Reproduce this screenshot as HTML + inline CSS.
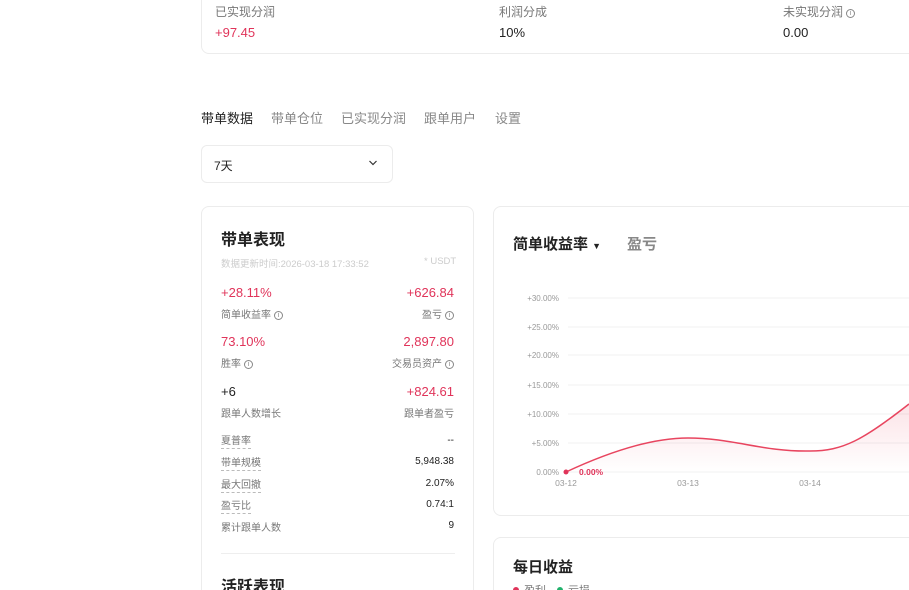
<!DOCTYPE html>
<html style="width:909px;height:590px;overflow:hidden"><head><meta charset="utf-8"><style>
*{margin:0;padding:0;box-sizing:border-box}
body{width:909px;height:590px;overflow:hidden;background:#fff;font-family:"Liberation Sans","Noto Sans CJK SC",sans-serif;color:#222}
#w{position:relative;width:909px;height:590px;overflow:hidden}
.a{position:absolute;white-space:nowrap}
.card{position:absolute;border:1px solid #ececec;border-radius:8px;background:#fff}
.red{color:#e0345a}
.g{color:#777}
.info{display:inline-block;width:9px;height:9px;border:1px solid #888;border-radius:50%;font-size:7px;line-height:7px;text-align:center;vertical-align:1px;margin-left:3px;color:#888}
.dash{border-bottom:1px dashed #bbb;padding-bottom:1px}
</style></head><body><div id="w">
<div class="card" style="left:201px;top:-10px;width:720px;height:64px"></div>
<div class="a g" style="left:215px;top:3px;font-size:12px">已实现分润</div>
<div class="a red" style="left:215px;top:25px;font-size:13px">+97.45</div>
<div class="a g" style="left:499px;top:3px;font-size:12px">利润分成</div>
<div class="a" style="left:499px;top:25px;font-size:13px">10%</div>
<div class="a g" style="left:783px;top:3px;font-size:12px">未实现分润<span class="info">i</span></div>
<div class="a" style="left:783px;top:25px;font-size:13px">0.00</div>

<div class="a" style="left:201px;top:108px;font-size:13px;color:#222">带单数据</div>
<div class="a" style="left:271px;top:108px;font-size:13px;color:#888">带单仓位</div>
<div class="a" style="left:341px;top:108px;font-size:13px;color:#888">已实现分润</div>
<div class="a" style="left:424px;top:108px;font-size:13px;color:#888">跟单用户</div>
<div class="a" style="left:495px;top:108px;font-size:13px;color:#888">设置</div>

<div class="card" style="left:201px;top:145px;width:192px;height:38px;border-radius:6px"></div>
<div class="a" style="left:214px;top:157px;font-size:12px">7天</div>
<svg class="a" style="left:368px;top:159px" width="10" height="8"><path d="M1.5 2 L5 5.5 L8.5 2" stroke="#333" stroke-width="1.2" fill="none"/></svg>

<div class="card" style="left:201px;top:206px;width:273px;height:400px"></div>
<div class="a" style="left:221px;top:226px;font-size:16px;font-weight:bold">带单表现</div>
<div class="a" style="left:221px;top:256px;font-size:9.5px;color:#ccc">数据更新时间:2026-03-18 17:33:52</div>
<div class="a" style="left:424px;top:256px;font-size:9.5px;color:#ccc">* USDT</div>
<div class="a red" style="left:221px;top:285px;font-size:13px">+28.11%</div>
<div class="a red" style="right:455px;top:285px;font-size:13px">+626.84</div>
<div class="a g" style="left:221px;top:306px;font-size:10px">简单收益率<span class="info">i</span></div>
<div class="a g" style="right:455px;top:306px;font-size:10px">盈亏<span class="info">i</span></div>
<div class="a red" style="left:221px;top:334px;font-size:13px">73.10%</div>
<div class="a red" style="right:455px;top:334px;font-size:13px">2,897.80</div>
<div class="a g" style="left:221px;top:355px;font-size:10px">胜率<span class="info">i</span></div>
<div class="a g" style="right:455px;top:355px;font-size:10px">交易员资产<span class="info">i</span></div>
<div class="a" style="left:221px;top:384px;font-size:13px">+6</div>
<div class="a red" style="right:455px;top:384px;font-size:13px">+824.61</div>
<div class="a g" style="left:221px;top:405px;font-size:10px">跟单人数增长</div>
<div class="a g" style="right:455px;top:405px;font-size:10px">跟单者盈亏</div>
<div class="a g" style="left:221px;top:432px;font-size:10px"><span class="dash">夏普率</span></div>
<div class="a" style="right:455px;top:435px;font-size:10px">--</div>
<div class="a g" style="left:221px;top:454px;font-size:10px"><span class="dash">带单规模</span></div>
<div class="a" style="right:455px;top:456px;font-size:10px">5,948.38</div>
<div class="a g" style="left:221px;top:476px;font-size:10px"><span class="dash">最大回撤</span></div>
<div class="a" style="right:455px;top:478px;font-size:10px">2.07%</div>
<div class="a g" style="left:221px;top:497px;font-size:10px"><span class="dash">盈亏比</span></div>
<div class="a" style="right:455px;top:499px;font-size:10px">0.74:1</div>
<div class="a g" style="left:221px;top:519px;font-size:10px">累计跟单人数</div>
<div class="a" style="right:455px;top:520px;font-size:10px">9</div>
<div class="a" style="left:221px;top:553px;width:234px;height:1px;background:#eee"></div>
<div class="a" style="left:221px;top:573px;font-size:16px;font-weight:bold">活跃表现</div>

<div class="card" style="left:493px;top:206px;width:440px;height:310px"></div>
<div class="a" style="left:513px;top:233px;font-size:15px;font-weight:bold">简单收益率 <span style="font-size:9px">▼</span></div>
<div class="a" style="left:627px;top:233px;font-size:15px;font-weight:bold;color:#888">盈亏</div>
<svg class="a" style="left:493px;top:280px" width="416" height="220">
<defs><linearGradient id="f" x1="0" y1="0" x2="0" y2="1"><stop offset="0" stop-color="#e8455f" stop-opacity=".15"/><stop offset="1" stop-color="#e8455f" stop-opacity="0"/></linearGradient></defs>
<g stroke="#f0f0f0" stroke-width="1">
<line x1="75" y1="18" x2="416" y2="18"/><line x1="75" y1="47" x2="416" y2="47"/><line x1="75" y1="75" x2="416" y2="75"/><line x1="75" y1="105" x2="416" y2="105"/><line x1="75" y1="134" x2="416" y2="134"/><line x1="75" y1="163" x2="416" y2="163"/><line x1="75" y1="192" x2="416" y2="192"/></g>
<g font-size="8" fill="#999" text-anchor="end" font-family="Liberation Sans">
<text x="66" y="21">+30.00%</text><text x="66" y="50">+25.00%</text><text x="66" y="78">+20.00%</text><text x="66" y="108">+15.00%</text><text x="66" y="137">+10.00%</text><text x="66" y="166">+5.00%</text><text x="66" y="195">0.00%</text></g>
<g font-size="8.5" fill="#999" text-anchor="middle" font-family="Liberation Sans"><text x="73" y="206">03-12</text><text x="195" y="206">03-13</text><text x="317" y="206">03-14</text></g>
<path d="M73 192 C120 170 160 158 195 158 C240 158 270 172 317 171 C350 171 370 160 416 124 L416 192 Z" fill="url(#f)"/>
<path d="M73 192 C120 170 160 158 195 158 C240 158 270 172 317 171 C350 171 370 160 416 124" stroke="#e8455f" stroke-width="1.5" fill="none"/>
<circle cx="73" cy="192" r="2.5" fill="#e0345a"/>
<text x="86" y="195" font-size="8.5" fill="#e0345a" font-weight="bold" font-family="Liberation Sans">0.00%</text>
</svg>

<div class="card" style="left:493px;top:537px;width:440px;height:100px"></div>
<div class="a" style="left:513px;top:556px;font-size:15px;font-weight:bold">每日收益</div>
<div class="a" style="left:513px;top:587px;width:6px;height:6px;border-radius:50%;background:#e0345a"></div>
<div class="a g" style="left:524px;top:582px;font-size:11px">盈利</div>
<div class="a" style="left:557px;top:587px;width:6px;height:6px;border-radius:50%;background:#20b26c"></div>
<div class="a g" style="left:568px;top:582px;font-size:11px">亏损</div>
</div></body></html>
